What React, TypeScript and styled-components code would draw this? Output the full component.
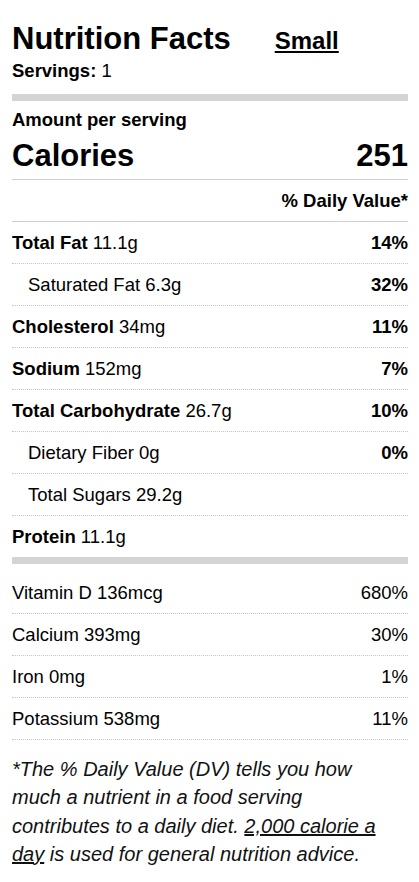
import React from 'react';
import styled, { createGlobalStyle } from 'styled-components';

const GlobalStyle = createGlobalStyle`
    body {
        margin: 0;
        background: #fff;
        font-family: "Liberation Sans", Arial, Helvetica, sans-serif;
        color: #000;
    }
`;

interface Nutrient {
    label: string;
    amount: string;
    dv?: string;
    bold?: boolean;
    indent?: boolean;
}

const mainNutrients: Nutrient[] = [
    { label: "Total Fat", amount: "11.1g", dv: "14%", bold: true },
    { label: "Saturated Fat", amount: "6.3g", dv: "32%", indent: true },
    { label: "Cholesterol", amount: "34mg", dv: "11%", bold: true },
    { label: "Sodium", amount: "152mg", dv: "7%", bold: true },
    { label: "Total Carbohydrate", amount: "26.7g", dv: "10%", bold: true },
    { label: "Dietary Fiber", amount: "0g", dv: "0%", indent: true },
    { label: "Total Sugars", amount: "29.2g", indent: true },
];

const vitamins: Nutrient[] = [
    { label: "Vitamin D", amount: "136mcg", dv: "680%" },
    { label: "Calcium", amount: "393mg", dv: "30%" },
    { label: "Iron", amount: "0mg", dv: "1%" },
    { label: "Potassium", amount: "538mg", dv: "11%" },
];

function NutrientRow({ label, amount, dv, bold, indent, boldDv = true }: Nutrient & { boldDv?: boolean }) {
    return (
        <Row $indent={indent}>
            <span>
                {bold ? <Strong>{label}</Strong> : label} {amount}
            </span>
            {dv && <Percent $bold={boldDv}>{dv}</Percent>}
        </Row>
    );
}

export default function App() {
    return (
        <Label>
            <GlobalStyle />
            <Header>
                <Title>Nutrition Facts</Title>
                <SizeLink href="#">Small</SizeLink>
            </Header>
            <Servings><Strong>Servings:</Strong> 1</Servings>
            <Bar $gap={12} />
            <AmountLabel>Amount per serving</AmountLabel>
            <CaloriesRow>
                <span>Calories</span>
                <span>251</span>
            </CaloriesRow>
            <DailyValueHead>% Daily Value*</DailyValueHead>
            {mainNutrients.map((n) => (
                <NutrientRow key={n.label} {...n} />
            ))}
            <Row $last>
                <span><Strong>Protein</Strong> 11.1g</span>
            </Row>
            <Bar $gap={0} />
            <VitaminList>
                {vitamins.map((n) => (
                    <NutrientRow key={n.label} {...n} boldDv={false} />
                ))}
            </VitaminList>
            <Footnote>
                *The % Daily Value (DV) tells you how much a nutrient in a food serving
                contributes to a daily diet. <u>2,000 calorie a day</u> is used for general nutrition advice.
            </Footnote>
        </Label>
    );
}

const Label = styled.div`
    padding: 21px 11px 24px 12px;
    font-size: 18.5px;
    line-height: 22px;
`;

const Header = styled.div`
    display: flex;
    align-items: baseline;
`;

const Title = styled.h1`
    margin: 0;
    font-size: 31px;
    line-height: 36px;
    font-weight: 700;
`;

const SizeLink = styled.a`
    margin-left: 44px;
    font-size: 24px;
    font-weight: 700;
    color: #000;
    text-decoration: underline;
`;

const Strong = styled.strong`
    font-weight: 700;
`;

const Servings = styled.div`
    margin-top: 3px;
`;

const Bar = styled.div<{ $gap: number }>`
    height: 7px;
    background: #d4d4d4;
    margin-top: ${(p) => p.$gap}px;
`;

const AmountLabel = styled.div`
    margin-top: 8px;
    font-weight: 700;
`;

const CaloriesRow = styled.div`
    display: flex;
    justify-content: space-between;
    margin-top: 7px;
    padding-bottom: 5px;
    border-bottom: 1px solid #cfcfcf;
    font-size: 31px;
    line-height: 36px;
    font-weight: 700;
`;

const DailyValueHead = styled.div`
    height: 41px;
    display: flex;
    align-items: center;
    justify-content: flex-end;
    border-bottom: 1px solid #cfcfcf;
    font-weight: 700;
`;

const Row = styled.div<{ $indent?: boolean; $last?: boolean }>`
    height: 41px;
    display: flex;
    align-items: center;
    justify-content: space-between;
    padding-left: ${(p) => (p.$indent ? '16px' : '0')};
    border-bottom: ${(p) => (p.$last ? 'none' : '1px dotted #c4c4c4')};
`;

const Percent = styled.span<{ $bold?: boolean }>`
    font-weight: ${(p) => (p.$bold ? 700 : 400)};
`;

const VitaminList = styled.div`
    margin-top: 8px;
`;

const Footnote = styled.p`
    margin: 15px 0 0;
    padding-right: 20px;
    font-size: 20px;
    line-height: 28.3px;
    font-style: italic;
    color: #111;

    u {
        text-decoration: underline;
    }
`;
